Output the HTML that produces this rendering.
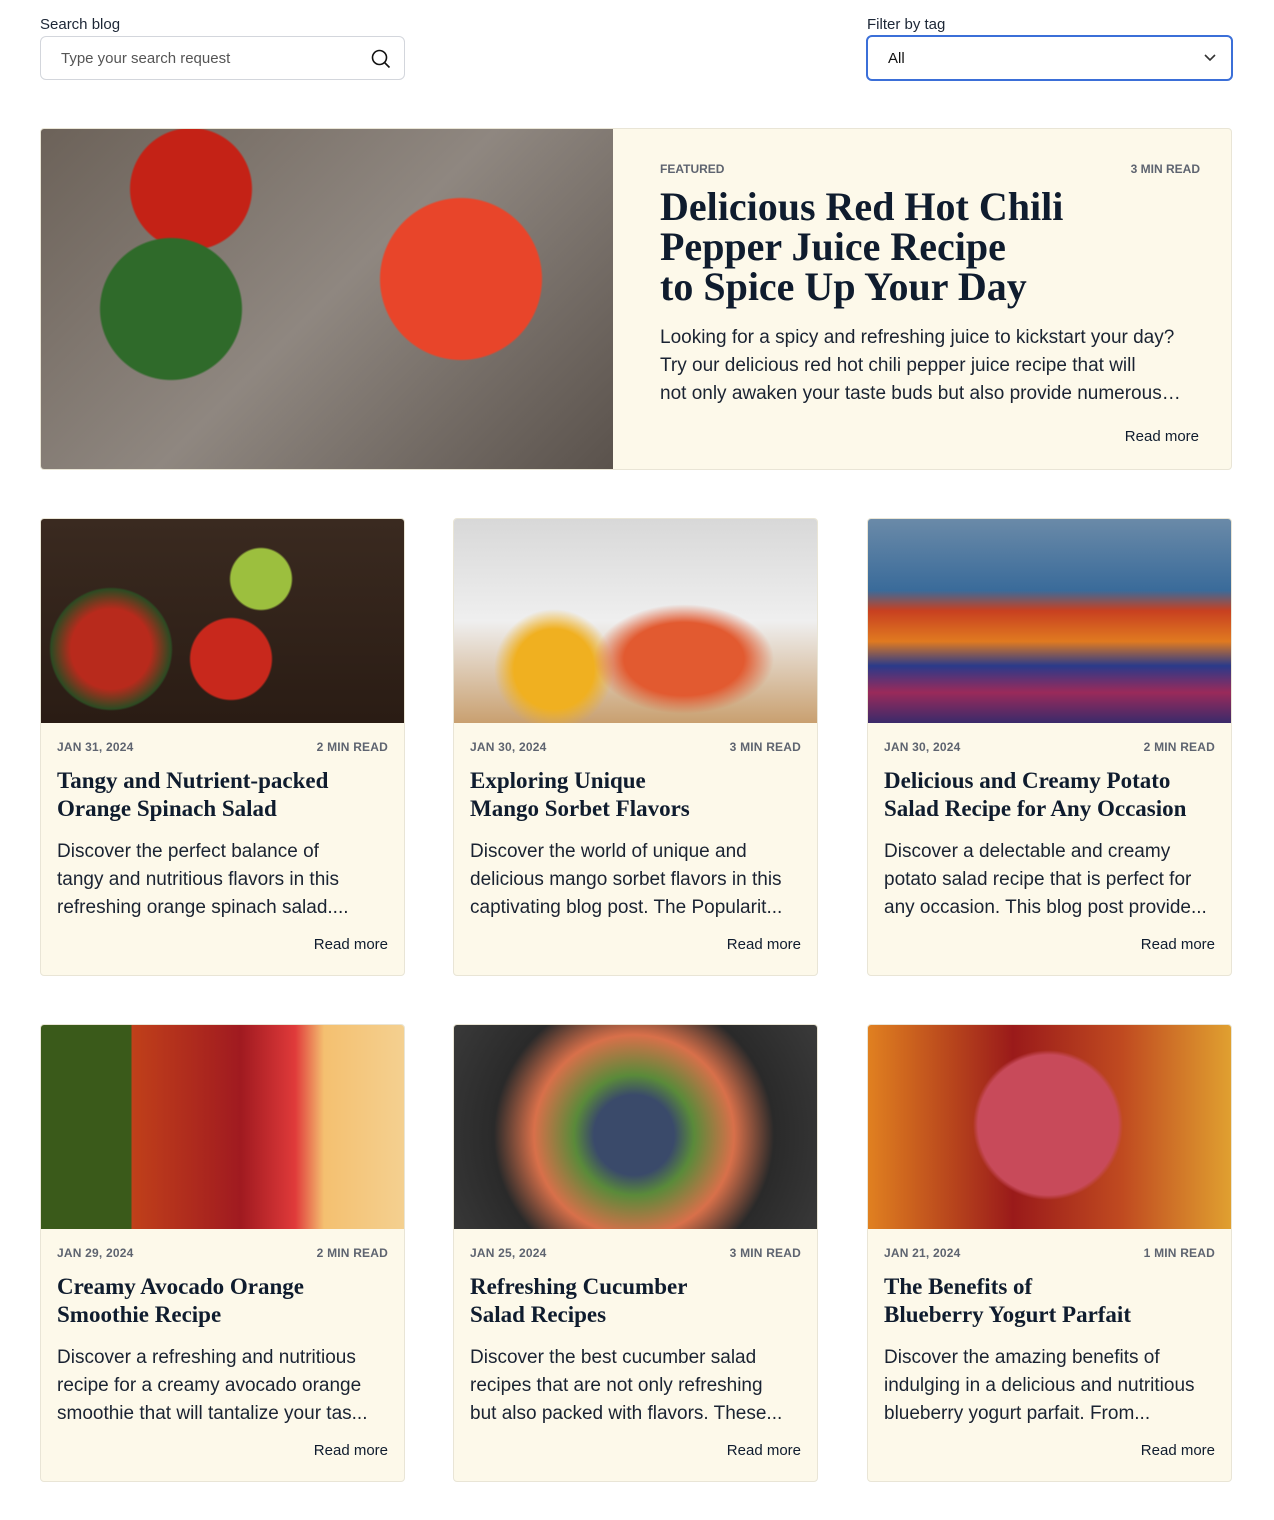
<!DOCTYPE html>
<html><head><meta charset="utf-8"><style>
*{box-sizing:border-box;margin:0;padding:0}
body{width:1274px;height:1520px;background:#fff;font-family:"Liberation Sans",sans-serif;color:#0f1c2e;position:relative;overflow:hidden}
.lbl{position:absolute;font-size:15px;color:#1c2636}
.inp{position:absolute;height:44px;border:1px solid #d3d6dc;border-radius:6px;font-size:15px;padding:0 20px;display:flex;align-items:center}
.card{position:absolute;width:365px;height:458px;background:#fdf9ea;border:1px solid #e9e5d6;border-radius:4px;overflow:hidden}
.card .img{height:204px}
.meta{display:flex;justify-content:space-between;font-size:12px;color:#5e6470;font-weight:bold;letter-spacing:.2px;padding:17px 16px 0}
.card h3{font-family:"Liberation Serif",serif;font-size:23px;line-height:28px;padding:13px 16px 0;font-weight:bold;white-space:nowrap}
.card p{font-size:19px;line-height:28px;padding:15px 16px 0;color:#1a2332;white-space:nowrap}
.rm{position:absolute;right:16px;bottom:22px;font-size:15px}
</style></head><body>
<div class="lbl" style="left:40px;top:16px">Search blog</div>
<div class="inp" style="left:40px;top:36px;width:365px;color:#555">Type your search request
<svg style="position:absolute;right:12px;top:11px" width="22" height="22" viewBox="0 0 22 22" fill="none" stroke="#111" stroke-width="1.6"><circle cx="9.5" cy="9.5" r="7"/><path d="M14.5 14.5l5 5"/></svg></div>
<div class="lbl" style="left:867px;top:16px">Filter by tag</div>
<div class="inp" style="left:866px;top:35px;width:367px;height:46px;border:2px solid #3b6fd8;color:#111">All
<svg style="position:absolute;right:14px;top:16px" width="14" height="10" viewBox="0 0 14 10" fill="none" stroke="#333" stroke-width="1.6"><path d="M2 2l5 5 5-5"/></svg></div>

<div style="position:absolute;left:40px;top:128px;width:1192px;height:342px;background:#fdf9ea;border:1px solid #e9e5d6;border-radius:4px;overflow:hidden">
<div style="position:absolute;left:0;top:0;width:572px;height:342px;background:radial-gradient(circle at 420px 150px,#e8452a 0 80px,transparent 82px),radial-gradient(circle at 130px 180px,#2f6a2a 0 70px,transparent 72px),radial-gradient(circle at 150px 60px,#c42216 0 60px,transparent 62px),linear-gradient(135deg,#6c6259,#8f8780 50%,#5a524c)"></div>
<div style="position:absolute;left:619px;top:33px;width:540px;display:flex;justify-content:space-between;font-size:12px;font-weight:bold;color:#5e6470">
<span>FEATURED</span><span>3 MIN READ</span></div>
<div style="position:absolute;left:619px;top:58px;font-family:'Liberation Serif',serif;font-weight:bold;font-size:40px;line-height:40px">Delicious Red Hot Chili<br>Pepper Juice Recipe<br>to Spice Up Your Day</div>
<div style="position:absolute;left:619px;top:195px;white-space:nowrap;font-size:19px;line-height:28px;color:#1a2332">Looking for a spicy and refreshing juice to kickstart your day?<br>Try our delicious red hot chili pepper juice recipe that will<br>not only awaken your taste buds but also provide numerous…</div>
<div style="position:absolute;right:32px;top:299px;font-size:15px">Read more</div>
</div>

<div class="card" style="left:40px;top:518px"><div class="img" style="background:radial-gradient(circle at 220px 60px,#9cbf3e 0 30px,transparent 32px),radial-gradient(circle at 190px 140px,#c8281c 0 40px,transparent 42px),radial-gradient(circle at 70px 130px,#b82a1c 0 40px,#2d4a22 60px,transparent 62px),linear-gradient(#3a2a20,#2a1c14)"></div>
<div class="meta"><span>JAN 31, 2024</span><span>2 MIN READ</span></div><h3>Tangy and Nutrient-packed<br>Orange Spinach Salad</h3><p>Discover the perfect balance of<br>tangy and nutritious flavors in this<br>refreshing orange spinach salad....</p><div class="rm">Read more</div></div>

<div class="card" style="left:453px;top:518px"><div class="img" style="background:radial-gradient(ellipse at 230px 140px,#e25a30 0 60px,transparent 90px),radial-gradient(circle at 100px 150px,#f0b020 0 40px,transparent 60px),linear-gradient(#d8d8d8,#efefef 50%,#c9a070)"></div>
<div class="meta"><span>JAN 30, 2024</span><span>3 MIN READ</span></div><h3>Exploring Unique<br>Mango Sorbet Flavors</h3><p>Discover the world of unique and<br>delicious mango sorbet flavors in this<br>captivating blog post. The Popularit...</p><div class="rm">Read more</div></div>

<div class="card" style="left:867px;top:518px"><div class="img" style="background:linear-gradient(#6a8aa8 0,#3a6b9a 35%,#c84020 45%,#e07a20 60%,#2a3a8a 72%,#9a2a5a 85%,#3a2a6a)"></div>
<div class="meta"><span>JAN 30, 2024</span><span>2 MIN READ</span></div><h3>Delicious and Creamy Potato<br>Salad Recipe for Any Occasion</h3><p>Discover a delectable and creamy<br>potato salad recipe that is perfect for<br>any occasion. This blog post provide...</p><div class="rm">Read more</div></div>

<div class="card" style="left:40px;top:1024px"><div class="img" style="background:linear-gradient(90deg,#3a5a1a 0,#3a5a1a 25%,#c0401a 25%,#a01a20 55%,#e03a3a 70%,#f4c070 78%,#f4d090)"></div>
<div class="meta"><span>JAN 29, 2024</span><span>2 MIN READ</span></div><h3>Creamy Avocado Orange<br>Smoothie Recipe</h3><p>Discover a refreshing and nutritious<br>recipe for a creamy avocado orange<br>smoothie that will tantalize your tas...</p><div class="rm">Read more</div></div>

<div class="card" style="left:453px;top:1024px"><div class="img" style="background:radial-gradient(circle at 180px 110px,#3a4a6a 0 40px,#5a8a3a 60px,#d8704a 100px,#2a2a2a 140px,#3a3a3a)"></div>
<div class="meta"><span>JAN 25, 2024</span><span>3 MIN READ</span></div><h3>Refreshing Cucumber<br>Salad Recipes</h3><p>Discover the best cucumber salad<br>recipes that are not only refreshing<br>but also packed with flavors. These...</p><div class="rm">Read more</div></div>

<div class="card" style="left:867px;top:1024px"><div class="img" style="background:radial-gradient(circle at 180px 100px,#c84a5a 0 70px,transparent 75px),linear-gradient(90deg,#e08020,#9a1a1a 40%,#c04a20 70%,#e0a030)"></div>
<div class="meta"><span>JAN 21, 2024</span><span>1 MIN READ</span></div><h3>The Benefits of<br>Blueberry Yogurt Parfait</h3><p>Discover the amazing benefits of<br>indulging in a delicious and nutritious<br>blueberry yogurt parfait. From...</p><div class="rm">Read more</div></div>
</body></html>
